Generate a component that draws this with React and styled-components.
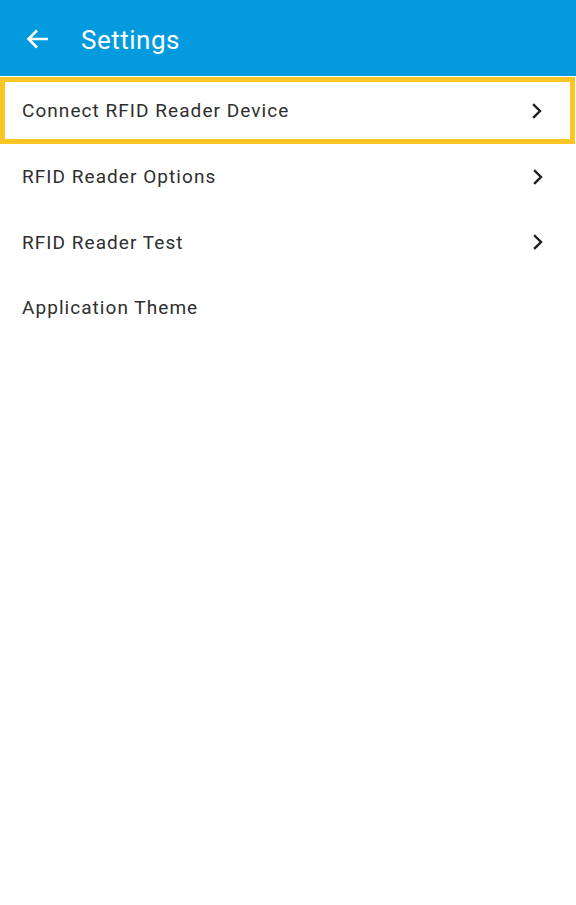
import React from "react";
import styled, { createGlobalStyle } from "styled-components";

const GlobalStyle = createGlobalStyle`
  html, body {
    margin: 0;
    padding: 0;
    background: #ffffff;
    font-family: Roboto, "Noto Sans", Arial, sans-serif;
  }
`;

const Page = styled.div`
  width: 576px;
  min-height: 905px;
  background: #fff;
`;

const AppBar = styled.header`
  height: 76px;
  background: #039ade;
  display: flex;
  align-items: center;
  padding: 2px 0 0 24px;
  box-sizing: border-box;
`;

const BackButton = styled.button`
  width: 28px;
  height: 28px;
  padding: 0;
  border: none;
  background: none;
  display: flex;
  align-items: center;
  justify-content: center;
  color: #fff;
`;

const Title = styled.h1`
  margin: 2px 0 0 29px;
  font-size: 26px;
  font-weight: 400;
  color: #fff;
  letter-spacing: 0.5px;
`;

const List = styled.ul`
  list-style: none;
  margin: 0;
  padding: 1px 0 0;
`;

const Item = styled.li`
  height: ${({ $selected }) => ($selected ? "67px" : "65.5px")};
  display: flex;
  align-items: center;
  justify-content: space-between;
  box-sizing: border-box;
  padding: 0 ${({ $selected }) => ($selected ? "26px 0 17px" : "31px 0 22px")};
  border: ${({ $selected }) => ($selected ? "5px solid #f9c623" : "none")};
  margin: ${({ $selected }) => ($selected ? "0 1px 0 0" : "0")};
  font-size: 19px;
  color: #2e2e2e;
  letter-spacing: 1.05px;
`;

const Chevron = () => (
  <svg width="14" height="16" viewBox="0 0 14 16">
    <path
      d="M4 2 L10 8 L4 14"
      fill="none"
      stroke="#1e1e1e"
      strokeWidth="2.4"
      strokeLinecap="square"
    />
  </svg>
);

const items = [
  { label: "Connect RFID Reader Device", arrow: true, selected: true },
  { label: "RFID Reader Options", arrow: true },
  { label: "RFID Reader Test", arrow: true },
  { label: "Application Theme", arrow: false },
];

export default function App() {
  return (
    <Page>
      <GlobalStyle />
      <AppBar>
        <BackButton aria-label="Back">
          <svg width="26" height="24" viewBox="0 0 26 24">
            <path
              d="M23 12 H4 M12 3.5 L3.5 12 L12 20.5"
              fill="none"
              stroke="#fff"
              strokeWidth="2.6"
            />
          </svg>
        </BackButton>
        <Title>Settings</Title>
      </AppBar>
      <List>
        {items.map((item) => (
          <Item key={item.label} $selected={item.selected}>
            <span>{item.label}</span>
            {item.arrow && <Chevron />}
          </Item>
        ))}
      </List>
    </Page>
  );
}
